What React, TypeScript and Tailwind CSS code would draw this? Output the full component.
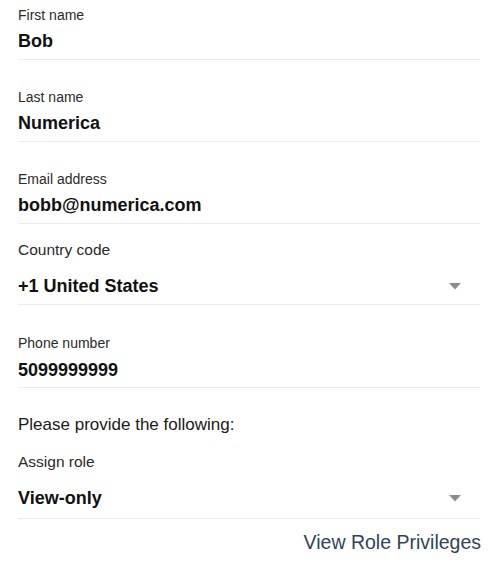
const fields = [
  { label: "First name", value: "Bob", pt: "pt-[5px]" },
  { label: "Last name", value: "Numerica", pt: "pt-[27px]" },
  { label: "Email address", value: "bobb@numerica.com", pt: "pt-[27px]" },
];

function Caret() {
  return (
    <svg width="12" height="7" viewBox="0 0 12 7" className="mr-[19px] shrink-0">
      <path d="M0 0 L12 0 L6 6.5 Z" fill="#8c8c8c" />
    </svg>
  );
}

function TextField({ label, value, pt, pb = "pb-[6px]", gap = "mt-[4px]" }: { label: string; value: string; pt: string; pb?: string; gap?: string }) {
  return (
    <div className={`${pt} ${pb} border-b border-[#ececec]`}>
      <div className="text-[14px] leading-5 text-[#2a2a2a]">{label}</div>
      <div className={`${gap} text-[18px] leading-6 font-bold text-[#111]`}>{value}</div>
    </div>
  );
}

function SelectField({ label, value, pt, pb }: { label: string; value: string; pt: string; pb: string }) {
  return (
    <div className={`${pt} ${pb} border-b border-[#ececec]`}>
      <div className="text-[15.5px] leading-[22px] text-[#2a2a2a]">{label}</div>
      <div className="mt-[13px] flex items-center justify-between">
        <span className="text-[18px] leading-6 font-bold text-[#111]">{value}</span>
        <Caret />
      </div>
    </div>
  );
}

export default function App() {
  return (
    <div className="w-[500px] h-[564px] overflow-hidden bg-white pl-[18px] pr-[20px] font-['Liberation_Sans',Arial,sans-serif]">
      {fields.map((f) => (
        <TextField key={f.label} label={f.label} value={f.value} pt={f.pt} />
      ))}
      <SelectField label="Country code" value="+1 United States" pt="pt-[15px]" pb="pb-[6px]" />
      <TextField label="Phone number" value="5099999999" pt="pt-[28px]" pb="pb-[5px]" gap="mt-[5px]" />
      <div className="mt-[25px] text-[17px] leading-6 text-[#1a1a1a]">Please provide the following:</div>
      <SelectField label="Assign role" value="View-only" pt="pt-[14px]" pb="pb-[8px]" />
      <div className="mt-[11px] flex justify-end">
        <a className="text-[19.5px] leading-6 text-[#2e4559] -mr-[1px]">View Role Privileges</a>
      </div>
    </div>
  );
}
